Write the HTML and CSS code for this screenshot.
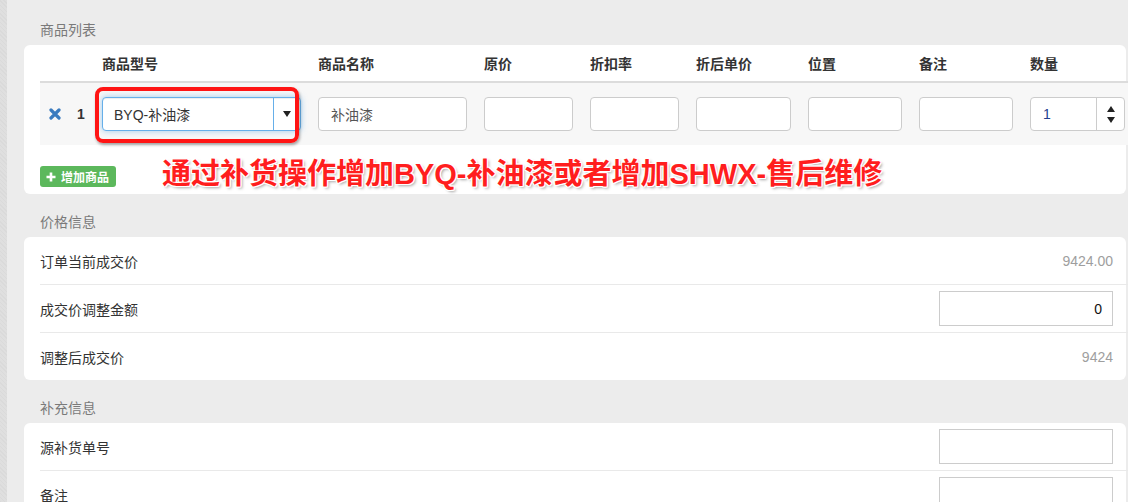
FILE: index.html
```html
<!DOCTYPE html>
<html lang="zh-CN">
<head>
<meta charset="utf-8">
<title>商品列表</title>
<link rel="stylesheet" href="styles.css">
</head>
<body>
<div class="page">
  <div class="strip"></div>
  <main class="main">
    <div class="sec-title first">商品列表</div>
    <section class="card card-products">
      <div class="grid head">
        <div></div>
        <div>商品型号</div>
        <div>商品名称</div>
        <div>原价</div>
        <div>折扣率</div>
        <div>折后单价</div>
        <div>位置</div>
        <div>备注</div>
        <div>数量</div>
      </div>
      <div class="grid row">
        <div class="idx">
          <svg class="del" width="12" height="12" viewBox="0 0 12 12"><path d="M2 2L10 10M10 2L2 10" stroke="#3a7bbf" stroke-width="3.2" stroke-linecap="round"/></svg>
          <span class="num">1</span>
        </div>
        <div class="select"><span class="sel-text">BYQ-补油漆</span><span class="sel-btn"><i class="caret-down"></i></span></div>
        <div class="field"><span>补油漆</span></div>
        <div class="field"></div>
        <div class="field"></div>
        <div class="field"></div>
        <div class="field"></div>
        <div class="field"></div>
        <div class="spinner"><span class="spin-val">1</span><span class="spin-btns"><i class="caret-up"></i><i class="caret-down"></i></span></div>
      </div>
      <div class="actions">
        <span class="btn-add"><svg width="10" height="10" viewBox="0 0 10 10"><path d="M5 0.5V9.5M0.5 5H9.5" stroke="#fff" stroke-width="2.6"/></svg>增加商品</span>
      </div>
      <div class="highlight"></div>
      <div class="annotation">通过补货操作增加BYQ-补油漆或者增加SHWX-售后维修</div>
    </section>

    <div class="sec-title">价格信息</div>
    <section class="card">
      <div class="kv-row"><span class="label">订单当前成交价</span><span class="value">9424.00</span></div>
      <div class="kv-row"><span class="label">成交价调整金额</span><div class="box num-box">0</div></div>
      <div class="kv-row last"><span class="label">调整后成交价</span><span class="value">9424</span></div>
    </section>

    <div class="sec-title">补充信息</div>
    <section class="card">
      <div class="kv-row"><span class="label">源补货单号</span><div class="box"></div></div>
      <div class="kv-row"><span class="label">备注</span><div class="box"></div></div>
    </section>
  </main>
</div>
</body>
</html>
```

FILE: styles.css
```css
* { box-sizing: border-box; }
html, body { margin: 0; padding: 0; }
body {
  background: #ececec;
  font-family: "Liberation Sans", "Noto Sans CJK SC", sans-serif;
  font-size: 14px;
  color: #333;
  overflow: hidden;
}
.page { display: flex; min-height: 502px; }
.strip {
  width: 7px;
  flex: none;
  background: repeating-linear-gradient(45deg, #dadada 0 1px, #dfdfdf 1px 3px);
}
.main { padding-left: 17px; flex: none; width: 1121px; }

.sec-title {
  height: 43px;
  padding: 18px 16px 5px;
  line-height: 20px;
  color: #7a7a7a;
}
.sec-title.first { height: 45px; padding-top: 20px; }

.card {
  position: relative;
  width: 1102px;
  background: #fff;
  border-radius: 6px;
  padding-left: 16px;
}
.card > * { width: 1088px; }

.grid {
  display: grid;
  grid-template-columns: 45px 199px 149px 89px 89px 95px 94px 94px 95px;
  column-gap: 17px;
  align-items: center;
}
.head {
  height: 38px;
  border-bottom: 2px solid #dcdcdc;
  font-weight: bold;
  color: #333;
}
.row {
  height: 62px;
  background: #f7f7f7;
}
.idx { display: flex; align-items: center; padding-left: 9px; }
.del { display: block; }
.num { margin-left: 16px; font-weight: bold; }

.select {
  height: 34px;
  border: 1px solid #66afe9;
  border-radius: 4px;
  background: #fff;
  box-shadow: inset 0 1px 1px rgba(0,0,0,.075), 0 0 6px rgba(102,175,233,.6);
  display: flex;
  align-items: center;
}
.sel-text { flex: 1; padding-left: 11px; color: #333; }
.sel-btn {
  width: 27px;
  height: 100%;
  border-left: 1px solid #66afe9;
  display: flex;
  align-items: center;
  justify-content: center;
}
.caret-down, .caret-up {
  display: block;
  width: 0;
  height: 0;
  border-left: 4px solid transparent;
  border-right: 4px solid transparent;
}
.caret-down { border-top: 6px solid #222; }
.caret-up { border-bottom: 6px solid #222; }

.field {
  height: 34px;
  border: 1px solid #ccc;
  border-radius: 4px;
  background: #fff;
  display: flex;
  align-items: center;
  padding-left: 12px;
  color: #555;
}
.spinner {
  height: 34px;
  border: 1px solid #ccc;
  border-radius: 4px;
  background: #fff;
  display: flex;
  align-items: center;
}
.spin-val { flex: 1; padding-left: 12px; color: #23408e; }
.spin-btns {
  width: 28px;
  height: 100%;
  border-left: 1px solid #ccc;
  display: flex;
  flex-direction: column;
  align-items: center;
  justify-content: center;
  gap: 5px;
}

.actions { height: 49px; padding-top: 21px; }
.btn-add {
  display: inline-flex;
  align-items: center;
  gap: 5px;
  height: 21px;
  padding: 0 7px 0 6px;
  background: #5cb85c;
  border-radius: 3px;
  color: #fff;
  font-size: 12px;
  font-weight: bold;
}
.btn-add svg { display: block; }

.highlight {
  position: absolute;
  left: 71px;
  top: 42px;
  width: 204px !important;
  height: 56px;
  border: 4px solid #ff1414;
  border-radius: 8px;
  box-shadow: 1px 2px 3px rgba(0,0,0,.35);
}
.annotation {
  position: absolute;
  left: 138px;
  top: 113px;
  width: auto !important;
  white-space: nowrap;
  font-size: 29px;
  line-height: 32px;
  font-weight: bold;
  color: #ff1e1e;
  text-shadow:
    1px 0 0 #fff, -1px 0 0 #fff, 0 1px 0 #fff, 0 -1px 0 #fff,
    1px 1px 0 #fff, -1px -1px 0 #fff, 1px -1px 0 #fff, -1px 1px 0 #fff,
    2px 2px 3px rgba(0,0,0,.35);
}

.kv-row {
  height: 48px;
  border-bottom: 1px solid #e9e9e9;
  display: flex;
  align-items: center;
  justify-content: space-between;
  padding-right: 15px;
}
.kv-row.last { border-bottom: 0; height: 47px; }
.label { color: #333; }
.value { color: #9e9e9e; }
.box {
  width: 174px;
  height: 35px;
  border: 1px solid #ccc;
  background: #fff;
}
.num-box {
  display: flex;
  align-items: center;
  justify-content: flex-end;
  padding-right: 10px;
  color: #111;
}
```
